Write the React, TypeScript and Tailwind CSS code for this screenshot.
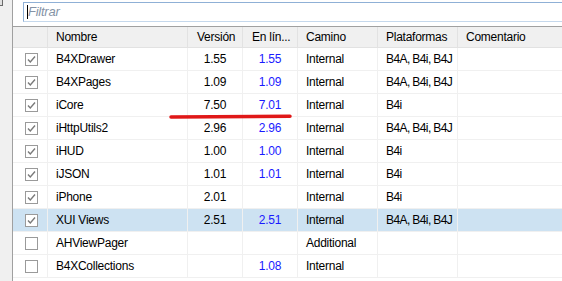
import React from "react";

const filas = [
  { nombre: "B4XDrawer", version: "1.55", online: "1.55", camino: "Internal", plataformas: "B4A, B4i, B4J", marcado: true },
  { nombre: "B4XPages", version: "1.09", online: "1.09", camino: "Internal", plataformas: "B4A, B4i, B4J", marcado: true },
  { nombre: "iCore", version: "7.50", online: "7.01", camino: "Internal", plataformas: "B4i", marcado: true },
  { nombre: "iHttpUtils2", version: "2.96", online: "2.96", camino: "Internal", plataformas: "B4A, B4i, B4J", marcado: true },
  { nombre: "iHUD", version: "1.00", online: "1.00", camino: "Internal", plataformas: "B4i", marcado: true },
  { nombre: "iJSON", version: "1.01", online: "1.01", camino: "Internal", plataformas: "B4i", marcado: true },
  { nombre: "iPhone", version: "2.01", online: "", camino: "Internal", plataformas: "B4i", marcado: true },
  { nombre: "XUI Views", version: "2.51", online: "2.51", camino: "Internal", plataformas: "B4A, B4i, B4J", marcado: true, seleccionada: true },
  { nombre: "AHViewPager", version: "", online: "", camino: "Additional", plataformas: "", marcado: false },
  { nombre: "B4XCollections", version: "", online: "1.08", camino: "Internal", plataformas: "", marcado: false },
];

function Casilla({ marcado }: { marcado: boolean }) {
  return (
    <div className="w-[13px] h-[13px] border border-[#9a9a9a] bg-white flex items-center justify-center">
      {marcado && (
        <svg width="11" height="11" viewBox="0 0 11 11">
          <path d="M2 5.5 L4.3 8 L9 2.5" fill="none" stroke="#7a7a7a" strokeWidth="1.4" />
        </svg>
      )}
    </div>
  );
}

export default function App() {
  return (
    <div
      className="relative w-[562px] h-[281px] overflow-hidden flex bg-white text-[12px] tracking-[-0.25px] text-black whitespace-nowrap"
      style={{ fontFamily: '"Liberation Sans", Arial, sans-serif' }}
    >
      <div className="w-[13px] shrink-0 bg-[#f0f0f0] border-r border-[#a0a0a0] relative">
        <div className="absolute left-0 top-0 w-[3px] h-[6px] border-r border-b border-[#6a6a6a] bg-[#e0e0e0]" />
      </div>

      <div className="flex-1 flex flex-col min-w-0">
        <div className="h-[26px] shrink-0 pt-[2px] pl-[10px]">
          <div className="h-[20px] w-[600px] border border-[#8fb0d6] border-b-[#c5d8ec] flex items-center pl-[3px]">
            <div className="w-px h-[14px] bg-black" />
            <span className="italic text-[13px] text-[#8593a6]">Filtrar</span>
          </div>
        </div>

        <div className="border-t border-[#a0a0a0]">
          <div className="flex h-[21px] bg-[#f0f0f0] border-b border-[#e2e2e2]">
            <div className="w-[35px] shrink-0 border-r border-[#e2e2e2]" />
            <div className="w-[140px] shrink-0 border-r border-[#e2e2e2] pl-[8px] flex items-center">Nombre</div>
            <div className="w-[55px] shrink-0 border-r border-[#e2e2e2] pl-[9px] flex items-center">Versión</div>
            <div className="w-[55px] shrink-0 border-r border-[#e2e2e2] pl-[9px] flex items-center">En lín...</div>
            <div className="w-[80px] shrink-0 border-r border-[#e2e2e2] pl-[8px] flex items-center">Camino</div>
            <div className="w-[80px] shrink-0 border-r border-[#e2e2e2] pl-[8px] flex items-center overflow-hidden">Plataformas</div>
            <div className="flex-1 pl-[8px] flex items-center">Comentario</div>
          </div>

          {filas.map((fila) => (
            <div
              key={fila.nombre}
              className={`flex h-[23px] border-b border-[#f0f0f0] ${fila.seleccionada ? "bg-[#cde2f2]" : ""}`}
            >
              <div className="w-[35px] shrink-0 border-r border-[#f0f0f0] pl-[12px] flex items-center">
                <Casilla marcado={fila.marcado} />
              </div>
              <div className="w-[140px] shrink-0 border-r border-[#f0f0f0] pl-[8px] flex items-center">{fila.nombre}</div>
              <div className="w-[55px] shrink-0 border-r border-[#f0f0f0] flex items-center justify-center">{fila.version}</div>
              <div className="w-[55px] shrink-0 border-r border-[#f0f0f0] flex items-center justify-center text-[#1a1aff]">{fila.online}</div>
              <div className="w-[80px] shrink-0 border-r border-[#f0f0f0] pl-[8px] flex items-center">{fila.camino}</div>
              <div className="w-[80px] shrink-0 border-r border-[#f0f0f0] pl-[8px] flex items-center overflow-hidden tracking-[-0.6px]">
                {fila.plataformas}
              </div>
              <div className="flex-1" />
            </div>
          ))}
        </div>
      </div>

      <svg className="absolute left-0 top-0 pointer-events-none" width="562" height="281">
        <path d="M171 117 L290 116.3" stroke="#e01818" strokeWidth="3.5" strokeLinecap="round" fill="none" />
      </svg>
    </div>
  );
}
